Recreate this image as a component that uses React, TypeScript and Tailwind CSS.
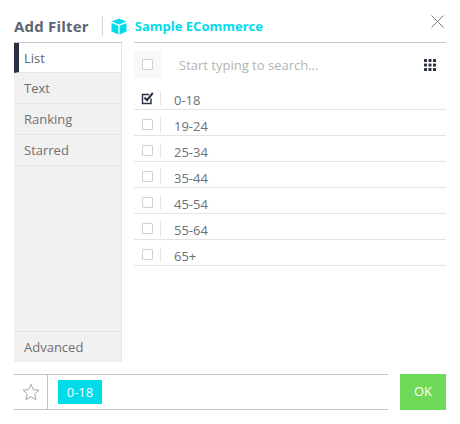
import React from "react";

const rows = ["0-18", "19-24", "25-34", "35-44", "45-54", "55-64", "65+"];

function Cube() {
  return (
    <svg width="16" height="17" viewBox="0 0 16 17" className="block">
      <path d="M8 0.5 L15.5 3.5 L8 6.5 L0.5 3.5 Z" fill="#00dcea" />
      <path d="M0.5 5 L7.3 7.7 V16.5 L0.5 13.6 Z" fill="#00dcea" />
      <path d="M15.5 5 L8.7 7.7 V16.5 L15.5 13.6 Z" fill="#00dcea" />
    </svg>
  );
}

function Box({ checked }: { checked?: boolean }) {
  if (checked) {
    return (
      <svg width="13" height="13" viewBox="0 0 13 13" className="block">
        <path d="M10 6.5 V11.5 H1.5 V2.5 H8" fill="none" stroke="#2a3044" strokeWidth="1.4" />
        <path d="M3.5 5.5 L6 8.2 L11.8 1" fill="none" stroke="#2a3044" strokeWidth="2" />
      </svg>
    );
  }
  return <div className="w-[11px] h-[11px] border border-[#d0d0d0] rounded-[1px] bg-white" />;
}

function SideItem({ label, active }: { label: string; active?: boolean }) {
  return (
    <div
      className={
        active
          ? "h-[30px] flex items-center bg-white border-l-[5px] border-[#2a3044] pl-[5px] pt-[2px] text-[#5f6470] border-b border-b-[#e4e4e4]"
          : "h-[31px] flex items-center bg-[#f1f1f1] pl-[10px] pt-[2px] text-[#707070] border-b border-[#e4e4e4]"
      }
    >
      {label}
    </div>
  );
}

export default function App() {
  return (
    <div
      className="w-[460px] h-[424px] bg-white relative text-[13px] overflow-hidden"
      style={{ fontFamily: '"Open Sans", sans-serif' }}
    >
      <div className="flex flex-col pl-[14px] pr-[14px] h-full">
        <div className="h-[43px] shrink-0 flex flex-col">
          <div className="h-[42px] flex items-end">
            <div className="flex items-center h-[20px] mb-[6px] w-full">
              <span className="text-[15px] font-bold text-[#5f6472] tracking-[0.2px] leading-none">Add Filter</span>
              <div className="w-px h-[20px] bg-[#d4d4d4] ml-[13px] mr-[8px]" />
              <Cube />
              <span className="text-[13px] font-bold text-[#00dcea] ml-[8px] leading-none">Sample ECommerce</span>
              <svg width="13" height="13" viewBox="0 0 13 13" className="ml-auto mr-[2px] mb-[9px]">
                <path d="M0.5 0.5 L12.5 12.5 M12.5 0.5 L0.5 12.5" stroke="#7a7f8a" strokeWidth="1" fill="none" />
              </svg>
            </div>
          </div>
          <div className="flex h-px">
            <div className="w-[108px] bg-[#c8c8c8]" />
            <div className="w-[12px]" />
            <div className="flex-1 bg-[#c8c8c8]" />
          </div>
        </div>

        <div className="flex h-[319px] shrink-0">
          <div className="w-[108px] flex flex-col bg-[#f1f1f1] border-r border-[#e4e4e4]">
            <SideItem label="List" active />
            <SideItem label="Text" />
            <SideItem label="Ranking" />
            <SideItem label="Starred" />
            <div className="mt-auto h-[31px] flex items-center pl-[10px] pt-[2px] text-[#707070] border-t border-[#e4e4e4]">
              Advanced
            </div>
          </div>

          <div className="ml-[12px] flex-1 flex flex-col">
            <div className="mt-[8px] h-[27px] flex items-center">
              <div className="w-[27px] h-[27px] bg-[#f8f8f8] flex items-center justify-center">
                <Box />
              </div>
              <span className="ml-[18px] pt-[2px] text-[#b4b4b4]">Start typing to search...</span>
              <svg width="12" height="12" viewBox="0 0 12 12" className="ml-auto mr-[10px]" fill="#2a3044">
                {[0, 4.5, 9].flatMap((y) =>
                  [0, 4.5, 9].map((x) => <rect key={`${x}-${y}`} x={x} y={y} width="3" height="3" rx="0.6" />)
                )}
              </svg>
            </div>
            <div className="mt-[6px]">
              {rows.map((r, i) => (
                <div key={r} className="h-[26px] flex items-center border-b border-[#e4e4e4]">
                  <div className="w-[26px] flex justify-center pl-[1px] pt-[3px]">
                    <Box checked={i === 0} />
                  </div>
                  <div className="w-px h-[15px] bg-[#e4e4e4] mt-[3px]" />
                  <span className="ml-[13px] text-[#6b7079] leading-none pt-[7px]">{r}</span>
                </div>
              ))}
            </div>
          </div>
        </div>

        <div className="mt-[12px] flex h-[36px] shrink-0">
          <div className="w-[374px] flex border-y border-[#c4c4c4]">
            <div className="w-[34px] flex items-center justify-center border-r border-[#c4c4c4]">
              <svg width="18" height="18" viewBox="0 0 18 18">
                <path
                  d="M9 1.2 L11.3 6.6 L17 7.1 L12.7 11 L14 16.7 L9 13.7 L4 16.7 L5.3 11 L1 7.1 L6.7 6.6 Z"
                  fill="none"
                  stroke="#a8a8a8"
                  strokeWidth="1"
                />
              </svg>
            </div>
            <div className="ml-[10px] mt-[5px] w-[44px] h-[24px] bg-[#00dcea] text-white flex items-center justify-center font-medium text-[13px] pt-[1px]">
              0-18
            </div>
          </div>
          <div className="ml-[12px] w-[46px] bg-[#6fd958] text-white flex items-center justify-center font-medium text-[13px]">
            OK
          </div>
        </div>
      </div>
    </div>
  );
}
